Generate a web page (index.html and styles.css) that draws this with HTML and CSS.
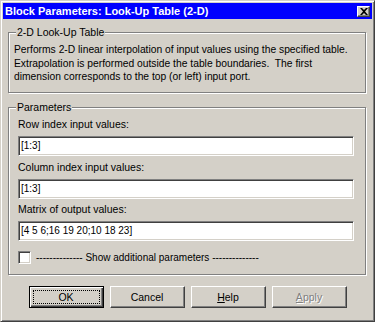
FILE: index.html
```html
<!DOCTYPE html>
<html lang="en">
<head>
  <meta charset="UTF-8" />
  <title>Block Parameters: Look-Up Table (2-D)</title>
  <link rel="stylesheet" href="styles.css">
</head>
<body>

  <div class="window">
    <div class="titlebar">
      <span class="title">Block Parameters: Look-Up Table (2-D)</span>
      <button class="close" aria-label="Close">
        <svg width="8" height="7" viewBox="0 0 8 7">
          <path d="M0 0 L2 0 L4 2 L6 0 L8 0 L5 3.5 L8 7 L6 7 L4 5 L2 7 L0 7 L3 3.5 Z" fill="#000"/>
        </svg>
      </button>
    </div>

    <div class="body">
      <div class="group group-info">
        <div class="group-label">2-D Look-Up Table</div>
        <p class="desc">
          Performs 2-D linear interpolation of input values using the specified table.<br>
          Extrapolation is performed outside the table boundaries.&nbsp; The first<br>
          dimension corresponds to the top (or left) input port.
        </p>
      </div>

      <div class="group group-params">
        <div class="group-label">Parameters</div>

        <div class="field">
          <label>Row index input values:</label>
          <div class="input">[1:3]</div>
        </div>
        <div class="field">
          <label>Column index input values:</label>
          <div class="input">[1:3]</div>
        </div>
        <div class="field">
          <label>Matrix of output values:</label>
          <div class="input">[4 5 6;16 19 20;10 18 23]</div>
        </div>

        <div class="check-row">
          <span class="checkbox"></span>
          <span>-------------- Show additional parameters --------------</span>
        </div>
      </div>

      <div class="buttons">
        <button class="btn default"><span class="focus">OK</span></button>
        <button class="btn">Cancel</button>
        <button class="btn"><u>H</u>elp</button>
        <button class="btn disabled"><u>A</u>pply</button>
      </div>
    </div>
  </div>

</body>
</html>
```

FILE: styles.css
```css
* { box-sizing: border-box; }

body {
  margin: 0;
  background: #d4d0c8;
  font-family: 'Liberation Sans', Arial, sans-serif;
  font-size: 10px;
  color: #000;
}

.window {
  width: 375px;
  height: 322px;
  background: #d4d0c8;
  border: 1px solid;
  border-color: #d4d0c8 #404040 #404040 #d4d0c8;
  box-shadow: inset 1px 1px 0 #fff, inset -1px -1px 0 #808080;
  padding: 2px;
  display: flex;
  flex-direction: column;
}

/* title bar */
.titlebar {
  height: 16px;
  background: #0000ff;
  display: flex;
  align-items: center;
  justify-content: space-between;
  padding: 0 2px;
}

.title {
  color: #fff;
  font-weight: bold;
  font-size: 11px;
  white-space: nowrap;
}

.close {
  width: 13px;
  height: 11px;
  padding: 0;
  background: #d4d0c8;
  border: 1px solid;
  border-color: #fff #404040 #404040 #fff;
  box-shadow: inset -1px -1px 0 #808080;
  display: flex;
  align-items: center;
  justify-content: center;
}

/* content */
.body {
  padding: 0 5px;
  display: flex;
  flex-direction: column;
}

.group {
  border: 1px solid #808080;
  box-shadow: inset 1px 1px 0 #fff, 1px 1px 0 #fff;
  margin-right: 1px;
}

.group-label {
  display: block;
  width: fit-content;
  background: #d4d0c8;
  padding: 0 1px;
  font-size: 10.5px;
  line-height: 13px;
  margin-top: -7px;
}

.group-info {
  margin-top: 13px;
  padding: 0 5px 8px;
}

.group-info .group-label {
  margin-left: 2px;
}

.desc {
  margin: 4px 0 0;
  font-size: 10.3px;
  line-height: 13.5px;
  white-space: nowrap;
}

.group-params {
  margin-top: 14px;
  padding: 0 11px 10px 9px;
}

.group-params .group-label {
  margin-left: -2px;
}

.field label {
  display: block;
  font-size: 10.5px;
  line-height: 13px;
  margin-top: 4.5px;
}

.field .input {
  margin-top: 5px;
  margin-bottom: 2px;
  height: 20px;
  background: #fff;
  border: 1px solid;
  border-color: #808080 #fff #fff #808080;
  box-shadow: inset 1px 1px 0 #404040, inset -1px -1px 0 #d4d0c8;
  padding: 0 2px;
  line-height: 18px;
  white-space: nowrap;
}

.check-row {
  margin-top: 9.5px;
  display: flex;
  align-items: center;
  gap: 5px;
  line-height: 13px;
}

.checkbox {
  width: 13px;
  height: 13px;
  background: #fff;
  border: 1px solid;
  border-color: #808080 #fff #fff #808080;
  box-shadow: inset 1px 1px 0 #404040, inset -1px -1px 0 #d4d0c8;
}

/* buttons */
.buttons {
  margin-top: 11px;
  display: flex;
  justify-content: center;
  gap: 6px;
}

.btn {
  width: 75px;
  height: 22px;
  padding: 0;
  font-family: inherit;
  font-size: 10.5px;
  color: #000;
  background: #d4d0c8;
  border: 1px solid;
  border-color: #fff #404040 #404040 #fff;
  box-shadow: inset -1px -1px 0 #808080;
}

.btn.default {
  border: 1px solid #000;
  box-shadow: inset 1px 1px 0 #fff, inset -1px -1px 0 #404040, inset -2px -2px 0 #808080;
  padding: 3px;
}

.btn .focus {
  display: flex;
  align-items: center;
  justify-content: center;
  height: 100%;
  border: 1px dotted #000;
}

.btn.disabled {
  color: #808080;
  text-shadow: 1px 1px 0 #fff;
}
```
